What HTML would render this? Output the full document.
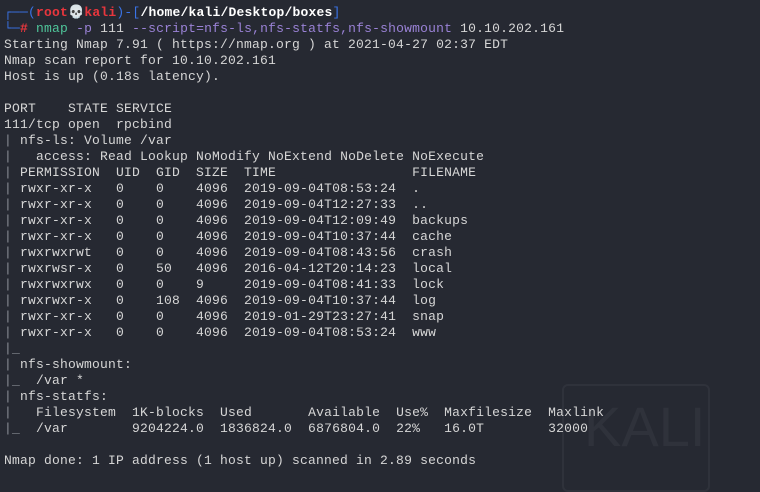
<!DOCTYPE html>
<html><head><meta charset="utf-8"><style>
html,body{margin:0;padding:0;}
body{width:760px;height:478px;background:#262932;overflow:hidden;position:relative;}
pre{margin:0;padding:5px 0 0 4px;font-family:"Liberation Mono","DejaVu Sans Mono",monospace;font-size:13px;line-height:16px;letter-spacing:0.2px;color:#d6d6d6;position:relative;z-index:2;}
.b{color:#3a74e8}.r{color:#e8363d;font-weight:bold}.w{color:#fff;font-weight:bold}
.g{color:#4fc59a}.p{color:#9a82d6}.bar{color:#8a8d96}
.wm{position:absolute;left:562px;top:384px;width:144px;height:104px;border:2px solid #2f323b;border-radius:6px;z-index:1;}
.wm span{position:absolute;left:20px;top:8px;font:56px "Liberation Sans",sans-serif;color:#2f323b;}
</style></head><body>
<div class="wm"><span>KALI</span></div>
<pre><span class="b">┌──(</span><span class="r">root💀kali</span><span class="b">)-[</span><span class="w">/home/kali/Desktop/boxes</span><span class="b">]</span>
<span class="b">└─</span><span class="r">#</span> <span class="g">nmap</span> <span class="p">-p</span> 111 <span class="p">--script=nfs-ls,nfs-statfs,nfs-showmount</span> 10.10.202.161
Starting Nmap 7.91 ( https://nmap.org ) at 2021-04-27 02:37 EDT
Nmap scan report for 10.10.202.161
Host is up (0.18s latency).

PORT    STATE SERVICE
111/tcp open  rpcbind
<span class="bar">|</span> nfs-ls: Volume /var
<span class="bar">|</span>   access: Read Lookup NoModify NoExtend NoDelete NoExecute
<span class="bar">|</span> PERMISSION  UID  GID  SIZE  TIME                 FILENAME
<span class="bar">|</span> rwxr-xr-x   0    0    4096  2019-09-04T08:53:24  .
<span class="bar">|</span> rwxr-xr-x   0    0    4096  2019-09-04T12:27:33  ..
<span class="bar">|</span> rwxr-xr-x   0    0    4096  2019-09-04T12:09:49  backups
<span class="bar">|</span> rwxr-xr-x   0    0    4096  2019-09-04T10:37:44  cache
<span class="bar">|</span> rwxrwxrwt   0    0    4096  2019-09-04T08:43:56  crash
<span class="bar">|</span> rwxrwsr-x   0    50   4096  2016-04-12T20:14:23  local
<span class="bar">|</span> rwxrwxrwx   0    0    9     2019-09-04T08:41:33  lock
<span class="bar">|</span> rwxrwxr-x   0    108  4096  2019-09-04T10:37:44  log
<span class="bar">|</span> rwxr-xr-x   0    0    4096  2019-01-29T23:27:41  snap
<span class="bar">|</span> rwxr-xr-x   0    0    4096  2019-09-04T08:53:24  www
<span class="bar">|_</span>
<span class="bar">|</span> nfs-showmount:
<span class="bar">|_</span>  /var *
<span class="bar">|</span> nfs-statfs:
<span class="bar">|</span>   Filesystem  1K-blocks  Used       Available  Use%  Maxfilesize  Maxlink
<span class="bar">|_</span>  /var        9204224.0  1836824.0  6876804.0  22%   16.0T        32000

Nmap done: 1 IP address (1 host up) scanned in 2.89 seconds</pre>
</body></html>
